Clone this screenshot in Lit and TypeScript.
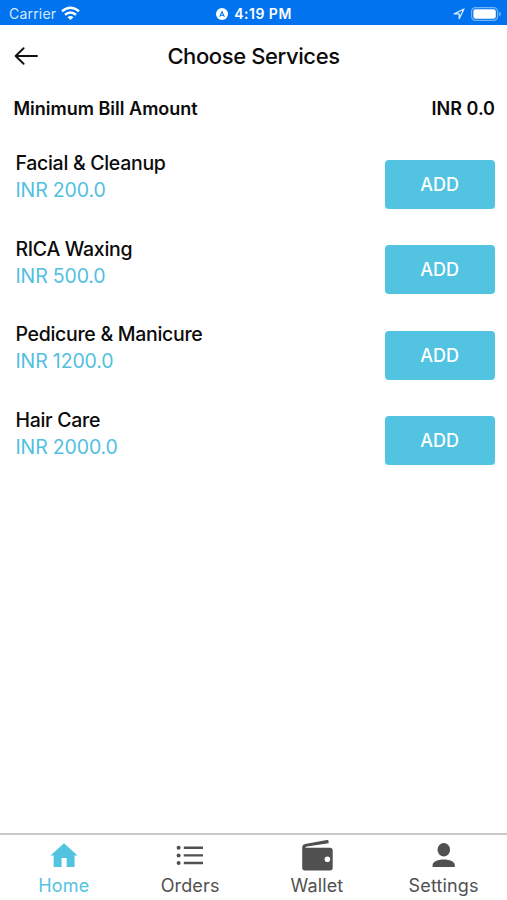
import { LitElement, html, css, svg } from "lit";
import { customElement } from "lit/decorators.js";
import { classMap } from "lit/directives/class-map.js";

const services = [
  { name: "Facial & Cleanup", price: "INR 200.0" },
  { name: "RICA Waxing", price: "INR 500.0" },
  { name: "Pedicure & Manicure", price: "INR 1200.0" },
  { name: "Hair Care", price: "INR 2000.0" },
];

const tabs = [
  {
    label: "Home",
    active: true,
    icon: svg`<path d="M20 4.2 33.6 16.6H30.6V28H22.7V19H17.6V28H9.7V16.6H6.4Z"/>`,
  },
  {
    label: "Orders",
    active: false,
    icon: svg`<circle cx="8.6" cy="8.8" r="2"/><circle cx="8.6" cy="16.4" r="2"/><circle cx="8.6" cy="24" r="2"/><path d="M13.8 7.6h19.2v2.4H13.8zM13.8 15.2h19.2v2.4H13.8zM13.8 22.8h19.2v2.4H13.8z"/>`,
  },
  {
    label: "Wallet",
    active: false,
    icon: svg`<path fill-rule="evenodd" d="M5.2 8.2Q5.3 5.6 8 5L30 1.1Q31.4.9 31.6 2.2V4.2L10 7.5Q8.3 7.9 8.3 8.7H33Q35.7 8.7 35.7 11.4V28.8Q35.7 31.5 33 31.5H7.9Q5.2 31.5 5.2 28.8ZM30.4 17.4a2.8 2.8 0 1 0 0 5.6a2.8 2.8 0 1 0 0-5.6Z"/>`,
  },
  {
    label: "Settings",
    active: false,
    icon: svg`<ellipse cx="19.8" cy="10.7" rx="6.3" ry="6.7"/><path d="M8.6 28V26.1C8.6 22.7 14 20.6 19.8 20.6S30.8 22.7 30.8 26.1V28Z"/>`,
  },
];

@customElement("app-root")
export class AppRoot extends LitElement {
  static styles = css`
    :host {
      display: flex;
      flex-direction: column;
      height: 900px;
      background: #fff;
      color: #0b0b0b;
      font-family: Inter, "Liberation Sans", sans-serif;
      overflow: hidden;
    }
    * {
      box-sizing: border-box;
    }
    svg {
      display: block;
      flex: none;
    }
    .status {
      display: grid;
      grid-template-columns: 1fr auto 1fr;
      align-items: center;
      height: 25px;
      padding: 2px 6px 0 9px;
      background: #0273ef;
      color: #fff;
      font-size: 14px;
      line-height: 22px;
    }
    .carrier,
    .clock,
    .indicators {
      display: flex;
      align-items: center;
    }
    .carrier {
      gap: 5px;
      color: #d5e9ff;
      letter-spacing: 0.2px;
    }
    .clock {
      gap: 6px;
      padding-right: 2px;
      font-weight: 600;
      letter-spacing: 0.5px;
    }
    .indicators {
      justify-content: flex-end;
      gap: 6px;
    }
    .nav {
      display: grid;
      grid-template-columns: 40px 1fr 40px;
      align-items: center;
      height: 62px;
      padding: 0 13px;
    }
    h1 {
      margin: 0;
      text-align: center;
      font-size: 22px;
      font-weight: 500;
      letter-spacing: -0.4px;
    }
    .minimum {
      display: flex;
      justify-content: space-between;
      align-items: center;
      height: 42px;
      padding: 0 12px 0 13.5px;
      font-size: 18px;
      font-weight: 600;
    }
    .list {
      flex: 1;
      padding-top: 12px;
    }
    .service {
      display: flex;
      justify-content: space-between;
      align-items: flex-start;
      height: 85.5px;
      padding: 9px 12.5px 0 15.5px;
    }
    .name,
    .price {
      font-size: 19.5px;
      line-height: 27px;
    }
    .name {
      font-weight: 500;
      letter-spacing: -0.3px;
    }
    .price {
      color: #52c0df;
      letter-spacing: -0.15px;
    }
    .add {
      width: 110px;
      height: 49px;
      margin-top: 9.5px;
      border: 0;
      border-radius: 4px;
      background: #52c3e1;
      color: #fff;
      font: 500 18px/49px Inter, "Liberation Sans", sans-serif;
      padding: 0;
    }
    .tabs {
      display: grid;
      grid-template-columns: repeat(4, 1fr);
      height: 67px;
      border-top: 2px solid #c8c8c8;
    }
    .tab {
      display: flex;
      flex-direction: column;
      align-items: center;
      padding-top: 4px;
      color: #505050;
      font-size: 18px;
      line-height: 26px;
      letter-spacing: 0.15px;
    }
    .tab.active {
      padding-left: 1px;
      color: #52c3e1;
    }
  `;

  render() {
    return html`
      <div class="status">
        <div class="carrier">
          <span>Carrier</span>
          <svg width="19" height="15" viewBox="0 0 19 15" fill="none" stroke="#fff" stroke-width="2.5">
            <path d="M1 5.3Q9.5-1.7 18 5.3" />
            <path d="M4 8.8Q9.5 4.1 15 8.8" />
            <path d="M9.5 14.1 6.5 11.2Q9.5 8.7 12.5 11.2Z" fill="#fff" stroke="none" />
          </svg>
        </div>
        <div class="clock">
          <svg width="12" height="12" viewBox="0 0 12 12">
            <circle cx="6" cy="6" r="6" fill="#fff" />
            <path d="M6 2.2 8.9 9 6 7.5 3.1 9Z" fill="#0273ef" />
            <path d="M6 5 6.9 6.7H5.1Z" fill="#fff" />
          </svg>
          <span>4:19 PM</span>
        </div>
        <div class="indicators">
          <svg width="12" height="12" viewBox="0 0 12 12" fill="none" stroke="#d5e9ff" stroke-width="1.3" stroke-linejoin="round">
            <path d="M11 1 6.2 10.6V5.9H1.2Z" />
          </svg>
          <svg width="30" height="14" viewBox="0 0 30 14">
            <rect x=".6" y=".6" width="26" height="12.8" rx="4" fill="none" stroke="#73b3f7" stroke-width="1.2" />
            <rect x="2.4" y="2.3" width="22.4" height="9.4" rx="2.2" fill="#fff" />
            <path d="M28.1 4.6Q30 5.4 30 7T28.1 9.4Z" fill="#73b3f7" />
          </svg>
        </div>
      </div>
      <div class="nav">
        <svg width="26" height="20" viewBox="0 0 26 20" fill="none" stroke="#111" stroke-width="1.9" stroke-linecap="round" stroke-linejoin="round">
          <path d="M24 10H2.6M10.6 2.2 2.6 10l8 7.8" />
        </svg>
        <h1>Choose Services</h1>
      </div>
      <div class="minimum"><span>Minimum Bill Amount</span><span>INR 0.0</span></div>
      <div class="list">
        ${services.map(
          (s) => html`
            <div class="service">
              <div>
                <div class="name">${s.name}</div>
                <div class="price">${s.price}</div>
              </div>
              <button class="add">ADD</button>
            </div>
          `
        )}
      </div>
      <div class="tabs">
        ${tabs.map(
          (t) => html`
            <div class=${classMap({ tab: true, active: t.active })}>
              <svg width="40" height="34" viewBox="0 0 40 34" fill="currentColor">${t.icon}</svg>
              <span>${t.label}</span>
            </div>
          `
        )}
      </div>
    `;
  }
}
